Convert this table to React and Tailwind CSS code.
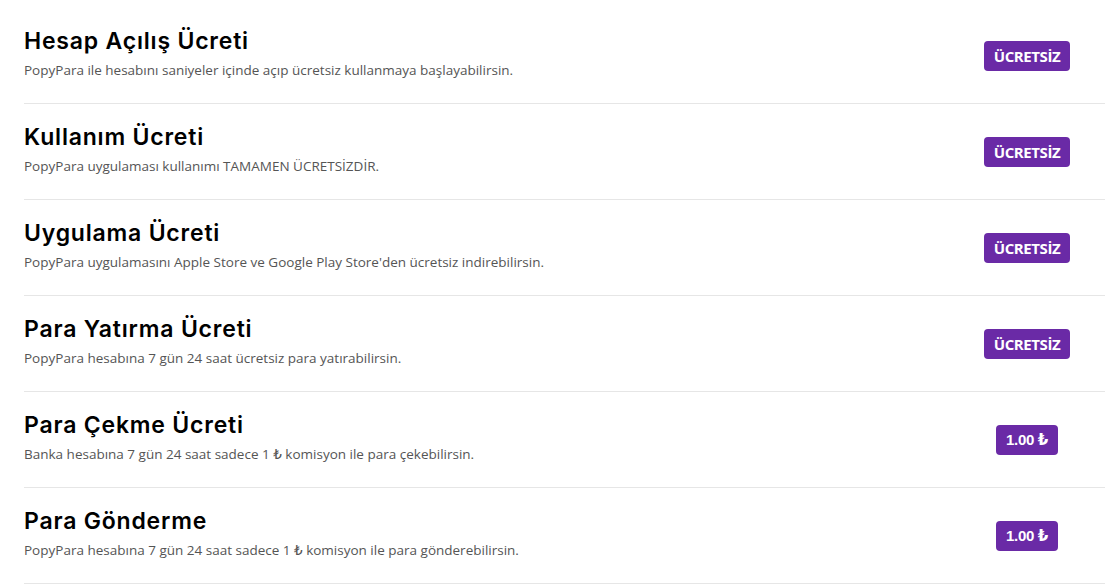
import React from 'react';

const fees = [
  {
    title: 'Hesap Açılış Ücreti',
    desc: 'PopyPara ile hesabını saniyeler içinde açıp ücretsiz kullanmaya başlayabilirsin.',
    price: 'ÜCRETSİZ',
  },
  {
    title: 'Kullanım Ücreti',
    desc: 'PopyPara uygulaması kullanımı TAMAMEN ÜCRETSİZDİR.',
    price: 'ÜCRETSİZ',
  },
  {
    title: 'Uygulama Ücreti',
    desc: "PopyPara uygulamasını Apple Store ve Google Play Store'den ücretsiz indirebilirsin.",
    price: 'ÜCRETSİZ',
  },
  {
    title: 'Para Yatırma Ücreti',
    desc: 'PopyPara hesabına 7 gün 24 saat ücretsiz para yatırabilirsin.',
    price: 'ÜCRETSİZ',
  },
  {
    title: 'Para Çekme Ücreti',
    desc: 'Banka hesabına 7 gün 24 saat sadece 1 ₺ komisyon ile para çekebilirsin.',
    price: '1.00 ₺',
  },
  {
    title: 'Para Gönderme',
    desc: 'PopyPara hesabına 7 gün 24 saat sadece 1 ₺ komisyon ile para gönderebilirsin.',
    price: '1.00 ₺',
  },
];

const PriceBadge = ({ price }) => {
  if (price === 'ÜCRETSİZ') {
    return (
      <span className="inline-block bg-[#6a2aa6] text-white rounded-[4px] px-[10px] h-[30px] leading-[30px] text-[15px] font-bold tracking-[-0.4px] font-['Open_Sans',sans-serif]">
        {price}
      </span>
    );
  }
  return (
    <span className="inline-block bg-[#6a2aa6] text-white rounded-[4px] px-[10px] h-[30px] leading-[30px] text-[15px] font-bold tracking-[-0.3px] font-['Liberation_Sans','DejaVu_Sans',sans-serif]">
      {price}
    </span>
  );
};

export default function App() {
  return (
    <div className="bg-white min-h-[585px] pt-[8px] pl-[24px] pr-[7px]">
      {fees.map((fee) => (
        <div key={fee.title} className="flex items-center h-[96px] border-b border-[#e6e6e6]">
          <div className="flex-1 pt-[19px] pb-[23px]">
            <h3 className="text-[23px] leading-[28px] font-semibold text-black tracking-[0.8px] font-['Inter',sans-serif]">
              {fee.title}
            </h3>
            <p className="mt-[5px] text-[13.5px] leading-[20px] text-[#555] font-['Open_Sans','DejaVu_Sans',sans-serif]">
              {fee.desc}
            </p>
          </div>
          <div className="w-[156px] flex justify-center">
            <PriceBadge price={fee.price} />
          </div>
        </div>
      ))}
    </div>
  );
}
